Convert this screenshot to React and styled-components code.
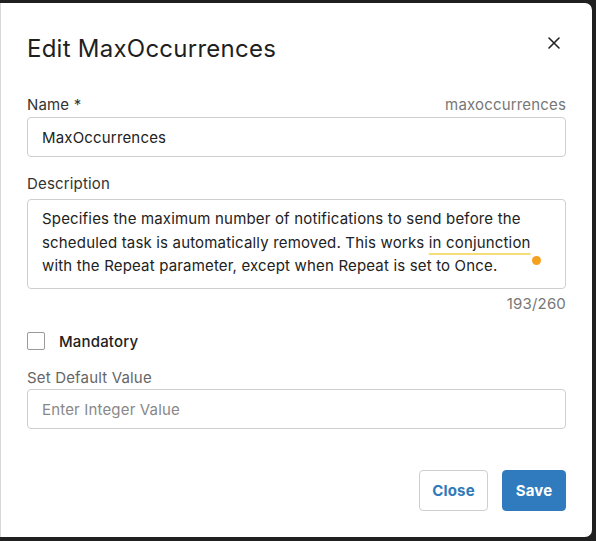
import React from "react";
import styled, { createGlobalStyle } from "styled-components";

const Global = createGlobalStyle`
  html, body { margin: 0; padding: 0; background: #202020; }
  body { font-family: Inter, "Noto Sans", sans-serif; letter-spacing: 0.17px; }
  * { box-sizing: border-box; }
`;

const Page = styled.div`
  width: 596px;
  height: 541px;
  padding: 3px 4px 4px 0;
  background: #202020;
`;

const Dialog = styled.div`
  width: 592px;
  height: 534px;
  background: #fff;
  border-radius: 0 7px 7px 0;
  border-left: 1px solid #d8d8d8;
  padding: 0 26px 0 26px;
  display: flex;
  flex-direction: column;
`;

const Header = styled.div`
  display: flex;
  align-items: center;
  justify-content: space-between;
  height: 91px;
`;

const Title = styled.h1`
  margin: 0;
  font-size: 24px;
  font-weight: 400;
  letter-spacing: 0.25px;
  color: #1f1f1f;
`;

const CloseIcon = styled.button`
  border: 0;
  background: none;
  padding: 0;
  width: 20px;
  height: 20px;
  margin: 0 2px 11px 0;
  display: flex;
  align-items: center;
  justify-content: center;
  cursor: pointer;
`;

const LabelRow = styled.div`
  display: flex;
  justify-content: space-between;
  align-items: center;
  height: 20px;
  margin-top: ${(p) => p.$mt || 0}px;
  margin-bottom: ${(p) => (p.$mb == null ? 3 : p.$mb)}px;
`;

const Label = styled.span`
  font-size: 15px;
  color: ${(p) => (p.$muted ? "#666" : "#333")};
`;

const Hint = styled.span`
  font-size: 15px;
  color: #777;
`;

const Field = styled.div`
  height: 40px;
  border: 1px solid #cfcfcf;
  border-radius: 4px;
  padding: 0 14px;
  display: flex;
  align-items: center;
  font-size: 15px;
  color: ${(p) => (p.$placeholder ? "#888" : "#222")};
`;

const TextArea = styled.div`
  position: relative;
  height: 90px;
  border: 1px solid #cfcfcf;
  border-radius: 4px;
  padding: 7px 14px;
  font-size: 15px;
  line-height: 23.5px;
  color: #222;
`;

const Flag = styled.span`
  text-decoration: underline;
  text-decoration-color: #f7dc7a;
  text-decoration-thickness: 2px;
  text-underline-offset: 5px;
`;

const Dot = styled.span`
  position: absolute;
  left: 504px;
  top: 56px;
  width: 9px;
  height: 9px;
  border-radius: 50%;
  background: #f5a11e;
`;

const Counter = styled.div`
  text-align: right;
  font-size: 15px;
  color: #777;
  margin-top: 6px;
  height: 18px;
  line-height: 18px;
`;

const CheckRow = styled.label`
  display: flex;
  align-items: center;
  gap: 14px;
  margin-top: 19px;
  height: 18px;
`;

const Box = styled.span`
  width: 18px;
  height: 18px;
  border: 1px solid #9a9a9a;
  border-radius: 2px;
  display: inline-block;
`;

const CheckLabel = styled.span`
  font-size: 15px;
  font-weight: 500;
  color: #222;
`;

const Footer = styled.div`
  display: flex;
  justify-content: flex-end;
  gap: 14px;
  margin-top: 41px;
`;

const Button = styled.button`
  height: 41px;
  width: ${(p) => (p.$primary ? 64 : 69)}px;
  padding: 0;
  border-radius: 4px;
  font-family: inherit;
  letter-spacing: inherit;
  font-size: 15px;
  font-weight: 700;
  border: 1px solid ${(p) => (p.$primary ? "#2f7bbd" : "#cfcfcf")};
  background: ${(p) => (p.$primary ? "#2f7bbd" : "#fff")};
  color: ${(p) => (p.$primary ? "#fff" : "#2f7ab9")};
  cursor: pointer;
`;

export default function App() {
  return (
    <Page>
      <Global />
      <Dialog>
        <Header>
          <Title>Edit MaxOccurrences</Title>
          <CloseIcon aria-label="Close">
            <svg width="12" height="12" viewBox="0 0 12 12">
              <path d="M1 1 L11 11 M11 1 L1 11" stroke="#222" strokeWidth="1.6" strokeLinecap="round" />
            </svg>
          </CloseIcon>
        </Header>
        <LabelRow>
          <Label>Name *</Label>
          <Hint>maxoccurrences</Hint>
        </LabelRow>
        <Field>MaxOccurrences</Field>
        <LabelRow $mt={16} $mb={6}>
          <Label>Description</Label>
        </LabelRow>
        <TextArea>
          Specifies the maximum number of notifications to send before the scheduled task is automatically removed. This works{" "}
          <Flag>in conjunction</Flag> with the Repeat parameter, except when Repeat is set to Once.
          <Dot />
        </TextArea>
        <Counter>193/260</Counter>
        <CheckRow>
          <Box />
          <CheckLabel>Mandatory</CheckLabel>
        </CheckRow>
        <LabelRow $mt={17} $mb={2}>
          <Label $muted>Set Default Value</Label>
        </LabelRow>
        <Field $placeholder>Enter Integer Value</Field>
        <Footer>
          <Button>Close</Button>
          <Button $primary>Save</Button>
        </Footer>
      </Dialog>
    </Page>
  );
}
